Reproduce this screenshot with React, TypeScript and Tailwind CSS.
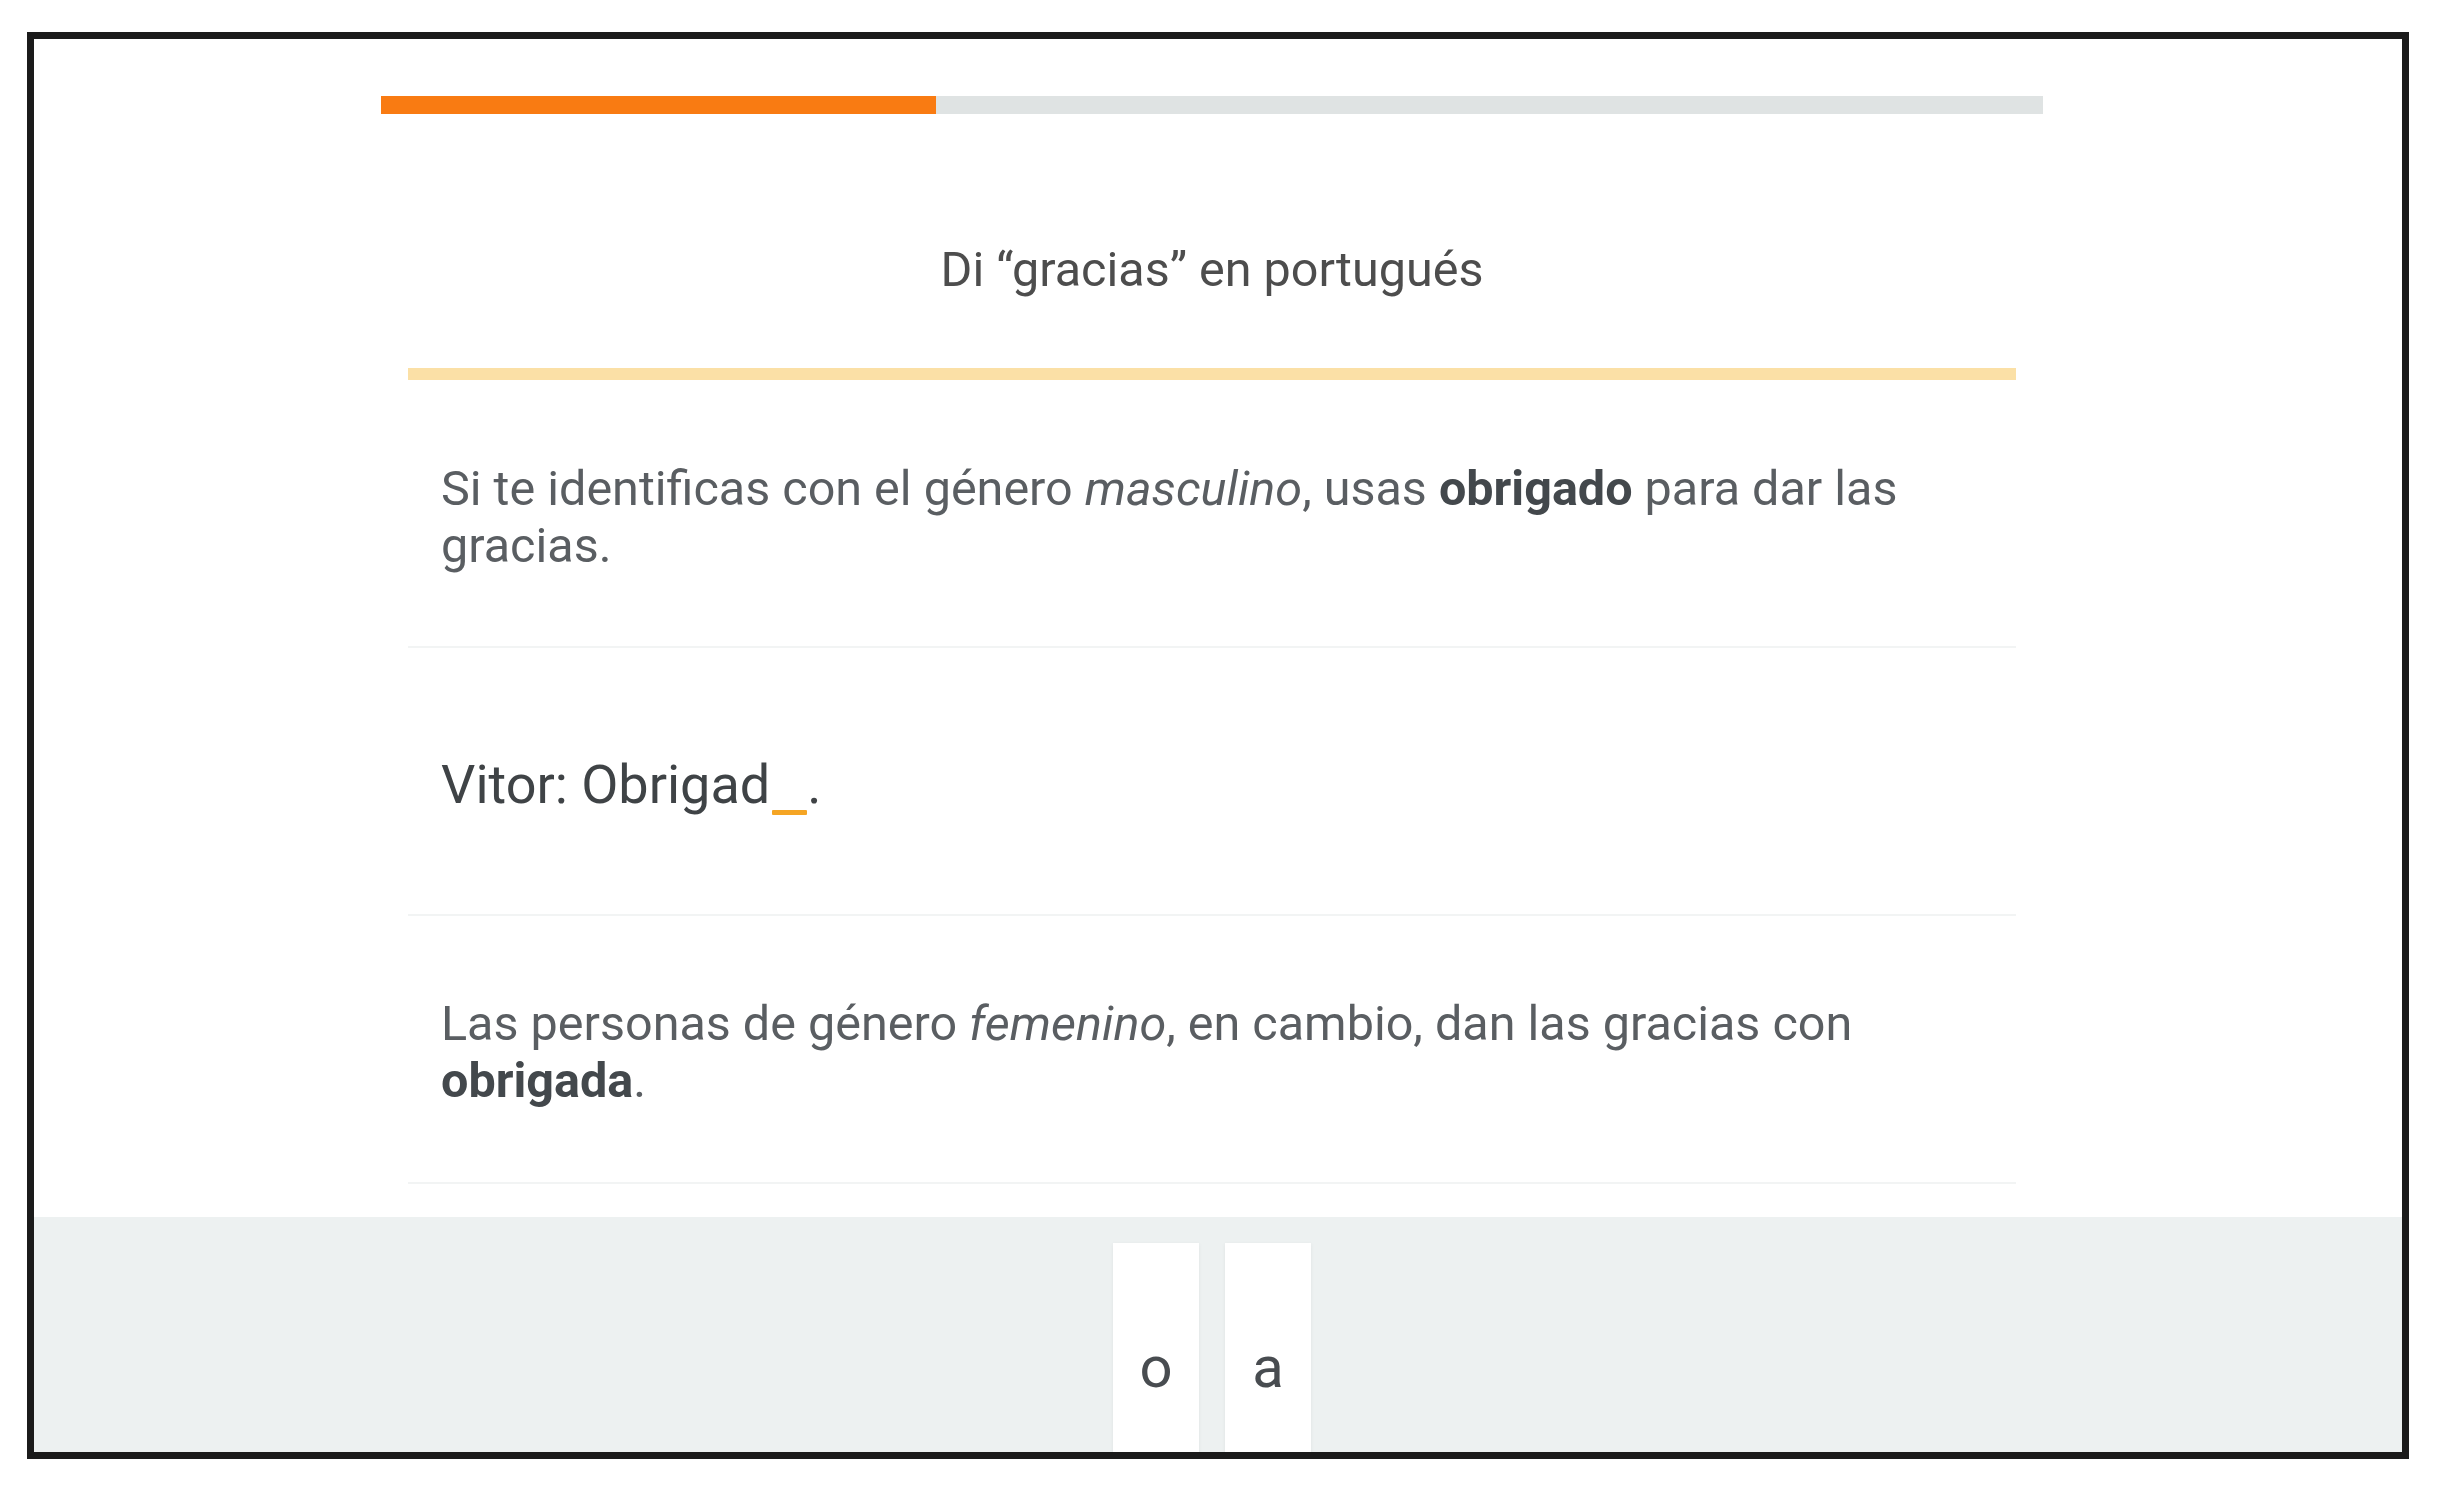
export default function App() {
  return (
    <div className="min-h-screen bg-white pl-[27px] pt-[32px] font-['Roboto',_'Liberation_Sans',_sans-serif]">
      {/* screenshot frame */}
      <div className="box-border w-[2382px] overflow-hidden border-[7px] border-[#1b1b1b] bg-white">
        <div className="ml-[347px] w-[1662px]">
          {/* progress */}
          <div className="mt-[57px] flex h-[18px] bg-[#dfe3e3]">
            <div className="h-full w-[555px] bg-[#f97b12]" />
          </div>

          <h1 className="mt-[127px] text-center text-[48.5px] leading-[57px] font-normal text-[#4d4d4d]">
            Di “gracias” en portugués
          </h1>

          <div className="mx-[27px] mt-[70px]">
            <div className="h-[12px] bg-[#fbe0a6]" />

            <section className="flex h-[268px] items-center border-b-2 border-[#f2f4f4] px-[33px] pt-[8px]">
              <p className="text-[48.5px] leading-[57px] text-[#5a5e62]">
                Si te identificas con el género <em>masculino</em>, usas{" "}
                <strong className="font-bold text-[#43484c]">obrigado</strong> para dar las
                <br />
                gracias.
              </p>
            </section>

            <section className="flex h-[268px] items-center border-b-2 border-[#f2f4f4] px-[33px] pt-[8px]">
              <p className="text-[54px] leading-[70px] text-[#3f4346]">
                Vitor: Obrigad
                <span className="ml-[2px] inline-block h-[5px] w-[35px] rounded-[1px] bg-[#f5a524] align-[-12px]" />
                .
              </p>
            </section>

            <section className="flex h-[268px] items-center border-b-2 border-[#f2f4f4] px-[33px] pt-[6px]">
              <p className="text-[48.5px] leading-[57px] text-[#5a5e62]">
                Las personas de género <em>femenino</em>, en cambio, dan las gracias con{" "}
                <strong className="font-bold text-[#43484c]">obrigada</strong>.
              </p>
            </section>
          </div>
        </div>

        {/* answer tray */}
        <div className="mt-[33px] flex h-[235px] justify-center gap-[26px] overflow-hidden bg-[#edf1f1] pr-[12px] pt-[26px]">
          {["o", "a"].map((letter) => (
            <button
              key={letter}
              className="flex h-[248px] w-[86px] shrink-0 items-center justify-center bg-white text-[58px] text-[#484c50] shadow-[0_1px_4px_rgba(0,0,0,0.06)]"
            >
              {letter}
            </button>
          ))}
        </div>
      </div>
    </div>
  );
}
